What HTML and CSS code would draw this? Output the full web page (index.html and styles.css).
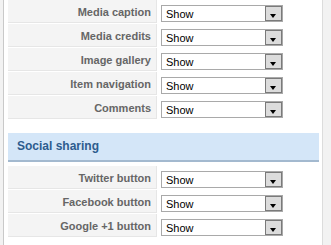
FILE: index.html
```html
<!DOCTYPE html>
<html lang="en">
<head>
    <meta charset="UTF-8">
    <meta name="viewport" content="width=device-width, initial-scale=1.0">
    <title>Item view options</title>
    <link rel="stylesheet" href="styles.css">
</head>
<body>

    <div class="page">
        <!-- Media / item options -->
        <div class="params">
            <div class="row">
                <label class="label" for="mediaCaption">Media caption</label>
                <div class="value">
                    <span class="sel"><select id="mediaCaption"><option>Show</option><option>Hide</option></select><span class="btn"><i></i></span></span>
                </div>
            </div>
            <div class="row">
                <label class="label" for="mediaCredits">Media credits</label>
                <div class="value">
                    <span class="sel"><select id="mediaCredits"><option>Show</option><option>Hide</option></select><span class="btn"><i></i></span></span>
                </div>
            </div>
            <div class="row">
                <label class="label" for="imageGallery">Image gallery</label>
                <div class="value">
                    <span class="sel"><select id="imageGallery"><option>Show</option><option>Hide</option></select><span class="btn"><i></i></span></span>
                </div>
            </div>
            <div class="row">
                <label class="label" for="itemNavigation">Item navigation</label>
                <div class="value">
                    <span class="sel"><select id="itemNavigation"><option>Show</option><option>Hide</option></select><span class="btn"><i></i></span></span>
                </div>
            </div>
            <div class="row">
                <label class="label" for="comments">Comments</label>
                <div class="value">
                    <span class="sel"><select id="comments"><option>Show</option><option>Hide</option></select><span class="btn"><i></i></span></span>
                </div>
            </div>
        </div>

        <!-- Social sharing -->
        <h3 class="section">Social sharing</h3>
        <div class="params">
            <div class="row">
                <label class="label" for="twitter">Twitter button</label>
                <div class="value">
                    <span class="sel"><select id="twitter"><option>Show</option><option>Hide</option></select><span class="btn"><i></i></span></span>
                </div>
            </div>
            <div class="row">
                <label class="label" for="facebook">Facebook button</label>
                <div class="value">
                    <span class="sel"><select id="facebook"><option>Show</option><option>Hide</option></select><span class="btn"><i></i></span></span>
                </div>
            </div>
            <div class="row">
                <label class="label" for="googlePlus">Google +1 button</label>
                <div class="value">
                    <span class="sel"><select id="googlePlus"><option>Show</option><option>Hide</option></select><span class="btn"><i></i></span></span>
                </div>
            </div>
        </div>
    </div>

</body>
</html>
```

FILE: styles.css
```css
body {
    font-family: 'Liberation Sans', Arial, sans-serif;
    margin: 0;
    padding: 0;
    background-color: #f2f2f2;
}
.page {
    width: 320px;
    box-sizing: border-box;
    min-height: 245px;
    margin-left: 3px;
    padding: 0 3px 0 4px;
    background-color: #fff;
    border-left: 1px solid #c9c9c9;
    border-right: 1px solid #dcdcdc;
}
.row {
    display: grid;
    grid-template-columns: 149px 1fr;
    height: 24px;
}
.label {
    box-sizing: border-box;
    height: 23px;
    padding: 5px 5px 0 0;
    text-align: right;
    font-size: 11px;
    font-weight: bold;
    line-height: 14px;
    color: #666;
    background-color: #f4f4f4;
    border-bottom: 1px solid #e6e6e6;
    border-right: 1px solid #e6e6e6;
}
.value {
    padding: 5px 0 0 4px;
}
.sel {
    position: relative;
    display: block;
    width: 122px;
    height: 17px;
}
.sel select {
    appearance: none;
    -webkit-appearance: none;
    display: block;
    width: 122px;
    height: 17px;
    margin: 0;
    padding: 0 0 0 4px;
    border: 1px solid #a9a9a9;
    border-radius: 0;
    background-color: #fff;
    font-family: 'Liberation Sans', Arial, sans-serif;
    font-size: 11px;
    color: #000;
    outline: none;
}
.btn {
    position: absolute;
    top: 1px;
    right: 1px;
    width: 17px;
    height: 15px;
    box-sizing: border-box;
    border: 1px solid #7a7a7a;
    background-color: #dcdcdc;
    pointer-events: none;
}
.btn i {
    position: absolute;
    left: 4px;
    top: 7px;
    width: 0;
    height: 0;
    border-left: 3.5px solid transparent;
    border-right: 3.5px solid transparent;
    border-top: 4px solid #000;
}
.section {
    margin: 13px 0 4px 0;
    height: 27px;
    padding: 0 0 0 9px;
    font-size: 12px;
    font-weight: bold;
    line-height: 27px;
    color: #2d5c8e;
    background-color: #d4e6f8;
    border-bottom: 2px solid #a3b9cf;
}
```
